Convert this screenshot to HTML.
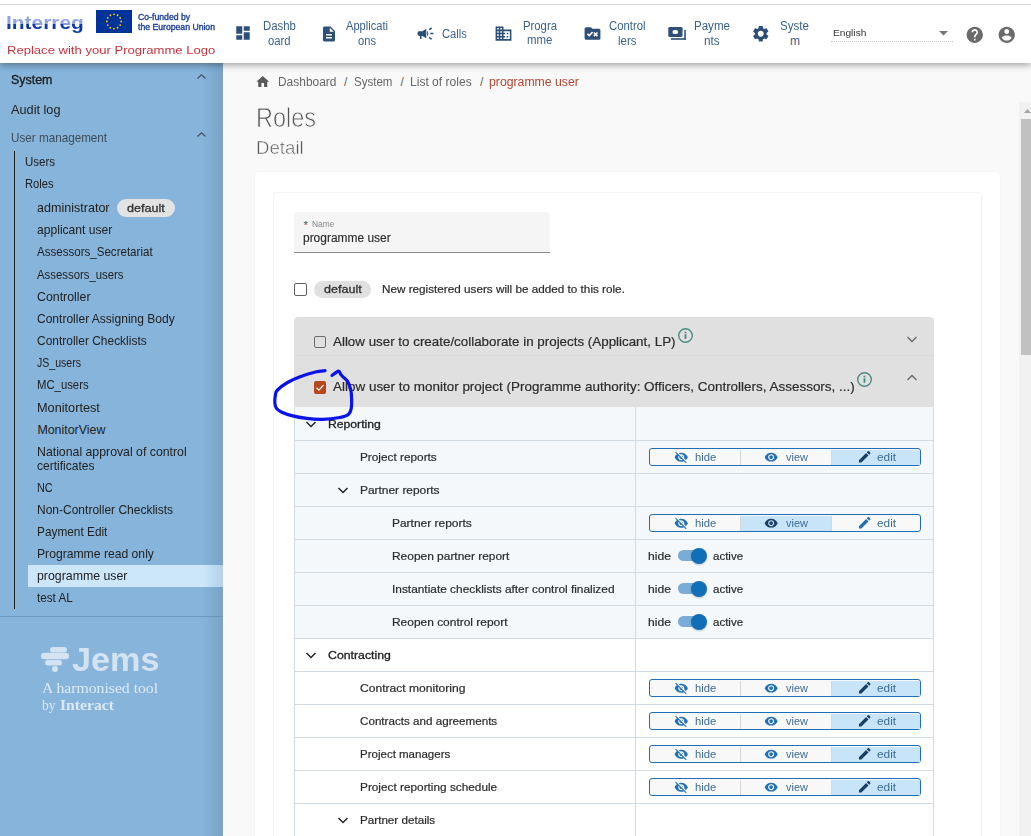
<!DOCTYPE html>
<html><head><meta charset="utf-8">
<style>
*{box-sizing:border-box;margin:0;padding:0}
html,body{width:1031px;height:836px;overflow:hidden;background:#f9f9f9;font-family:"Liberation Sans",sans-serif;color:#333;position:relative}
.abs{position:absolute}
.t{position:absolute;white-space:nowrap}
</style></head><body>
<div class="abs" style="left:0px;top:0px;width:1031px;height:4px;background:#fff;z-index:7"></div>
<div class="abs" style="left:0px;top:4px;width:1031px;height:1px;background:#dadada;z-index:7"></div>
<div class="abs" style="left:0px;top:63px;width:223px;height:773px;background:#86b4da"></div>
<div class="abs" style="left:201px;top:63px;width:22px;height:773px;background:linear-gradient(to right,rgba(50,70,90,0),rgba(50,70,90,.15))"></div>
<div class="abs" style="left:223px;top:63px;width:808px;height:773px;background:#f9f9f9"></div>
<div class="abs" style="left:0px;top:5px;width:1031px;height:58px;background:#fff;box-shadow:0 2px 7px rgba(0,0,0,.36);z-index:5"></div>
<div class="t" style="left:6.2px;top:10px;font-size:18.5px;line-height:26px;font-weight:700;transform:scaleX(1.13);transform-origin:0 0;z-index:6;background:linear-gradient(to bottom,#8fa3e3 0,#8fa3e3 53%,#0f3aa5 53%,#0f3aa5 100%);-webkit-background-clip:text;background-clip:text;color:transparent">Interreg</div>
<svg class="abs" style="left:96px;top:10px;z-index:6" width="36" height="23" viewBox="0 0 36 23"><rect width="36" height="23" fill="#003399"/><circle cx="18.00" cy="4.30" r="0.9" fill="#ffcc00"/><circle cx="21.60" cy="5.26" r="0.9" fill="#ffcc00"/><circle cx="24.24" cy="7.90" r="0.9" fill="#ffcc00"/><circle cx="25.20" cy="11.50" r="0.9" fill="#ffcc00"/><circle cx="24.24" cy="15.10" r="0.9" fill="#ffcc00"/><circle cx="21.60" cy="17.74" r="0.9" fill="#ffcc00"/><circle cx="18.00" cy="18.70" r="0.9" fill="#ffcc00"/><circle cx="14.40" cy="17.74" r="0.9" fill="#ffcc00"/><circle cx="11.76" cy="15.10" r="0.9" fill="#ffcc00"/><circle cx="10.80" cy="11.50" r="0.9" fill="#ffcc00"/><circle cx="11.76" cy="7.90" r="0.9" fill="#ffcc00"/><circle cx="14.40" cy="5.26" r="0.9" fill="#ffcc00"/></svg>
<div class="t" style="left:138.00px;top:11.75px;font-size:8.5px;line-height:10px;color:#1b3f9a;transform:scaleX(1.0227);transform-origin:0 0;z-index:6;-webkit-text-stroke:0.35px #1b3f9a;">Co-funded by</div>
<div class="t" style="left:138.00px;top:21.95px;font-size:8.5px;line-height:10px;color:#1b3f9a;transform:scaleX(1.0184);transform-origin:0 0;z-index:6;-webkit-text-stroke:0.35px #1b3f9a;">the European Union</div>
<div class="t" style="left:7.20px;top:42.98px;font-size:11.3px;line-height:14px;color:#c9323f;transform:scaleX(1.1559);transform-origin:0 0;z-index:6;">Replace with your Programme Logo</div>
<svg class="abs" style="left:234px;top:24px;z-index:6;" width="18" height="18" viewBox="0 0 24 24"><path fill="#2d5078" d="M3 13h8V3H3v10zm0 8h8v-6H3v6zm10 0h8V11h-8v10zm0-18v6h8V3h-8z"/></svg>
<div class="t" style="left:262.70px;top:18.84px;font-size:12px;line-height:14px;color:#3a6288;transform:scaleX(0.9458);transform-origin:0 0;z-index:6;">Dashb</div>
<div class="t" style="left:267.80px;top:33.64px;font-size:12px;line-height:14px;color:#3a6288;transform:scaleX(0.9417);transform-origin:0 0;z-index:6;">oard</div>
<svg class="abs" style="left:320px;top:25px;z-index:6;" width="18" height="18" viewBox="0 0 24 24"><path fill="#2d5078" d="M14 2H6c-1.1 0-1.99.9-1.99 2L4 20c0 1.1.89 2 1.99 2H18c1.1 0 2-.9 2-2V8l-6-6zm2 16H8v-2h8v2zm0-4H8v-2h8v2zm-3-5V3.5L18.5 9H13z"/></svg>
<div class="t" style="left:345.90px;top:18.84px;font-size:12px;line-height:14px;color:#3a6288;transform:scaleX(0.9281);transform-origin:0 0;z-index:6;">Applicati</div>
<div class="t" style="left:358.00px;top:33.64px;font-size:12px;line-height:14px;color:#3a6288;transform:scaleX(0.9317);transform-origin:0 0;z-index:6;">ons</div>
<svg class="abs" style="left:415.5px;top:24px;z-index:6;" width="19" height="19" viewBox="0 0 24 24"><path fill="#2d5078" d="M18 11v2h4v-2h-4zm-2 6.61c.96.71 2.21 1.65 3.2 2.39.4-.53.8-1.07 1.2-1.6-.99-.74-2.24-1.68-3.2-2.4-.4.54-.8 1.08-1.2 1.61zM20.4 5.6c-.4-.53-.8-1.07-1.2-1.6-.99.74-2.240 1.68-3.2 2.4.4.53.8 1.07 1.2 1.6.96-.72 2.21-1.65 3.2-2.4zM4 9c-1.1 0-2 .9-2 2v2c0 1.1.9 2 2 2h1v4h2v-4h1l5 3V6L8 9H4zm11.5 3c0-1.33-.58-2.530-1.5-3.35v6.69c.92-.81 1.5-2.01 1.5-3.34z"/></svg>
<div class="t" style="left:441.50px;top:26.64px;font-size:12px;line-height:14px;color:#3a6288;transform:scaleX(0.9288);transform-origin:0 0;z-index:6;">Calls</div>
<svg class="abs" style="left:493.5px;top:23.8px;z-index:6;" width="19" height="19" viewBox="0 0 24 24"><path fill="#2d5078" d="M12 7V3H2v18h20V7H12zM6 19H4v-2h2v2zm0-4H4v-2h2v2zm0-4H4V9h2v2zm0-4H4V5h2v2zm4 12H8v-2h2v2zm0-4H8v-2h2v2zm0-4H8V9h2v2zm0-4H8V5h2v2zm10 12h-8v-2h2v-2h-2v-2h2v-2h-2V9h8v10zm-2-8h-2v2h2v-2zm0 4h-2v2h2v-2z"/></svg>
<div class="t" style="left:523.00px;top:18.84px;font-size:12px;line-height:14px;color:#3a6288;transform:scaleX(0.9429);transform-origin:0 0;z-index:6;">Progra</div>
<div class="t" style="left:527.40px;top:33.44px;font-size:12px;line-height:14px;color:#3a6288;transform:scaleX(0.9535);transform-origin:0 0;z-index:6;">mme</div>
<svg class="abs" style="left:582.5px;top:23.8px;z-index:6;" width="19" height="19" viewBox="0 0 24 24"><path fill="#2d5078" d="M20 6h-8l-2-2H4c-1.1 0-1.99.9-1.99 2L2 18c0 1.1.9 2 2 2h16c1.1 0 2-.9 2-2V8c0-1.1-.9-2-2-2zM7.83 16L5 13.17l1.41-1.41 1.41 1.41 3.54-3.54 1.41 1.41L7.83 16zm9.58-3L19 14.59 17.59 16 16 14.41 14.41 16 13 14.59 14.59 13 13 11.41 14.41 10 16 11.59 17.59 10 19 11.41 17.41 13z"/></svg>
<div class="t" style="left:609.00px;top:18.84px;font-size:12px;line-height:14px;color:#3a6288;transform:scaleX(0.9457);transform-origin:0 0;z-index:6;">Control</div>
<div class="t" style="left:617.90px;top:33.64px;font-size:12px;line-height:14px;color:#3a6288;transform:scaleX(0.9524);transform-origin:0 0;z-index:6;">lers</div>
<div class="t" style="left:693.50px;top:18.84px;font-size:12px;line-height:14px;color:#3a6288;transform:scaleX(0.9620);transform-origin:0 0;z-index:6;">Payme</div>
<div class="t" style="left:703.60px;top:33.64px;font-size:12px;line-height:14px;color:#3a6288;transform:scaleX(0.9800);transform-origin:0 0;z-index:6;">nts</div>
<svg class="abs" style="left:750.6px;top:24.2px;z-index:6;" width="19.5" height="19.5" viewBox="0 0 24 24"><path fill="#2d5078" d="M19.14 12.94c.04-.3.06-.61.06-.94 0-.32-.02-.64-.07-.94l2.03-1.58c.18-.14.23-.41.12-.61l-1.92-3.32c-.12-.22-.37-.29-.59-.22l-2.39.96c-.5-.38-1.03-.7-1.62-.94l-.36-2.54c-.04-.24-.24-.41-.48-.41h-3.84c-.24 0-.43.17-.47.41l-.36 2.540c-.59.24-1.13.57-1.62.94l-2.39-.96c-.22-.08-.47 0-.59.22L2.74 8.87c-.12.21-.08.47.12.61l2.03 1.58c-.05.3-.09.63-.09.94s.02.64.07.94l-2.03 1.58c-.18.14-.23.41-.12.61l1.92 3.32c.12.22.37.29.59.22l2.39-.96c.5.38 1.03.7 1.62.94l.36 2.54c.05.24.24.41.48.41h3.84c.24 0 .44-.17.47-.41l.36-2.54c.59-.24 1.13-.56 1.62-.94l2.39.96c.22.08.47 0 .59-.22l1.92-3.32c.12-.22.07-.47-.12-.61l-2.01-1.58zM12 15.6c-1.98 0-3.6-1.62-3.6-3.6s1.62-3.6 3.6-3.6 3.6 1.62 3.6 3.6-1.620 3.6-3.6 3.6z"/></svg>
<div class="t" style="left:780.00px;top:18.84px;font-size:12px;line-height:14px;color:#3a6288;transform:scaleX(0.9667);transform-origin:0 0;z-index:6;">Syste</div>
<div class="t" style="left:789.90px;top:33.64px;font-size:12px;line-height:14px;color:#3a6288;z-index:6;">m</div>
<svg class="abs" style="left:0px;top:0px;z-index:6" width="1031" height="63" viewBox="0 0 1031 63"><g fill="#2d5078"><rect x="668.3" y="27" width="14.2" height="9.9" rx="1.3"/><rect x="684.2" y="30" width="1.6" height="9.8"/><rect x="670.9" y="38.2" width="14.9" height="1.6"/></g><rect x="672.6" y="29.9" width="5.4" height="4.1" rx="1.6" fill="#fff"/></svg>
<div class="t" style="left:832.60px;top:27.47px;font-size:9.6px;line-height:12px;color:#333;transform:scaleX(1.0607);transform-origin:0 0;z-index:6;">English</div>
<svg class="abs" style="left:937px;top:29px;z-index:6" width="12" height="8" viewBox="0 0 12 8"><path d="M2 2l4.5 4.5L11 2z" fill="#757575"/></svg>
<div class="abs" style="left:831px;top:41px;width:122px;height:1px;border-top:1px dotted #c8c8c8;z-index:6"></div>
<svg class="abs" style="left:965.2px;top:24.5px;z-index:6;" width="19.5" height="19.5" viewBox="0 0 24 24"><path fill="#6b6b6b" d="M12 2C6.48 2 2 6.48 2 12s4.48 10 10 10 10-4.48 10-10S17.52 2 12 2zm1 17h-2v-2h2v2zm2.07-7.75l-.9.92C13.45 12.9 13 13.5 13 15h-2v-.5c0-1.1.45-2.1 1.17-2.83l1.24-1.26c.37-.36.59-.86.59-1.41 0-1.1-.9-2-2-2s-2 .9-2 2H8c0-2.21 1.79-4 4-4s4 1.79 4 4c0 .88-.36 1.68-.93 2.25z"/></svg>
<svg class="abs" style="left:997.2px;top:24.5px;z-index:6;" width="19.5" height="19.5" viewBox="0 0 24 24"><path fill="#6b6b6b" d="M12 2C6.48 2 2 6.48 2 12s4.48 10 10 10 10-4.48 10-10S17.52 2 12 2zm0 3c1.66 0 3 1.34 3 3s-1.34 3-3 3-3-1.34-3-3 1.34-3 3-3zm0 14.2c-2.5 0-4.71-1.28-6-3.22.03-1.99 4-3.08 6-3.08 1.99 0 5.970 1.09 6 3.08-1.29 1.94-3.5 3.22-6 3.22z"/></svg>
<div class="t" style="left:10.80px;top:73.17px;font-size:12.5px;line-height:15px;color:#1f1f1f;transform:scaleX(0.9931);transform-origin:0 0;-webkit-text-stroke:0.35px #1f1f1f;">System</div>
<svg class="abs" style="left:195px;top:72px;" width="12" height="9" viewBox="0 0 12 9"><path d="M2.5 6.5L6.5 2.8 10.5 6.5" fill="none" stroke="#3d4f60" stroke-width="1.1"/></svg>
<div class="t" style="left:10.80px;top:103.37px;font-size:12.5px;line-height:15px;color:#222;transform:scaleX(1.0180);transform-origin:0 0;">Audit log</div>
<div class="t" style="left:10.80px;top:130.57px;font-size:12.2px;line-height:15px;color:#3e4c59;transform:scaleX(0.9587);transform-origin:0 0;">User management</div>
<svg class="abs" style="left:195px;top:130px;" width="12" height="9" viewBox="0 0 12 9"><path d="M2.5 6.5L6.5 2.8 10.5 6.5" fill="none" stroke="#3d4f60" stroke-width="1.1"/></svg>
<div class="abs" style="left:14px;top:151px;width:1px;height:458px;background:#1e1e1e"></div>
<div class="t" style="left:24.80px;top:154.70px;font-size:12.4px;line-height:15px;color:#222;transform:scaleX(0.9300);transform-origin:0 0;">Users</div>
<div class="t" style="left:24.80px;top:176.70px;font-size:12.4px;line-height:15px;color:#222;transform:scaleX(0.8996);transform-origin:0 0;">Roles</div>
<div class="abs" style="left:28px;top:565px;width:195px;height:22px;background:#cce6fa"></div>
<div class="abs" style="left:203px;top:565px;width:20px;height:22px;background:linear-gradient(to right,rgba(30,70,110,0),rgba(30,70,110,.13))"></div>
<div class="t" style="left:37.40px;top:200.50px;font-size:12.4px;line-height:15px;color:#222;transform:scaleX(1.0129);transform-origin:0 0;">administrator</div>
<div class="t" style="left:37.40px;top:222.80px;font-size:12.4px;line-height:15px;color:#222;transform:scaleX(0.9768);transform-origin:0 0;">applicant user</div>
<div class="t" style="left:37.40px;top:245.40px;font-size:12.4px;line-height:15px;color:#222;transform:scaleX(0.9326);transform-origin:0 0;">Assessors_Secretariat</div>
<div class="t" style="left:37.40px;top:267.60px;font-size:12.4px;line-height:15px;color:#222;transform:scaleX(0.9171);transform-origin:0 0;">Assessors_users</div>
<div class="t" style="left:37.40px;top:289.50px;font-size:12.4px;line-height:15px;color:#222;transform:scaleX(0.9971);transform-origin:0 0;">Controller</div>
<div class="t" style="left:37.40px;top:311.70px;font-size:12.4px;line-height:15px;color:#222;transform:scaleX(0.9706);transform-origin:0 0;">Controller Assigning Body</div>
<div class="t" style="left:37.40px;top:333.70px;font-size:12.4px;line-height:15px;color:#222;transform:scaleX(0.9656);transform-origin:0 0;">Controller Checklists</div>
<div class="t" style="left:36.80px;top:355.50px;font-size:12.4px;line-height:15px;color:#222;transform:scaleX(0.8509);transform-origin:0 0;">JS_users</div>
<div class="t" style="left:37.40px;top:378.00px;font-size:12.4px;line-height:15px;color:#222;transform:scaleX(0.9136);transform-origin:0 0;">MC_users</div>
<div class="t" style="left:37.40px;top:400.70px;font-size:12.4px;line-height:15px;color:#222;transform:scaleX(1.0258);transform-origin:0 0;">Monitortest</div>
<div class="t" style="left:37.40px;top:422.80px;font-size:12.4px;line-height:15px;color:#222;">MonitorView</div>
<div class="t" style="left:37.40px;top:445.20px;font-size:12.4px;line-height:15px;color:#222;transform:scaleX(0.9923);transform-origin:0 0;">National approval of control</div>
<div class="t" style="left:37.40px;top:458.80px;font-size:12.4px;line-height:15px;color:#222;transform:scaleX(0.9718);transform-origin:0 0;">certificates</div>
<div class="t" style="left:37.40px;top:480.60px;font-size:12.4px;line-height:15px;color:#222;transform:scaleX(0.8762);transform-origin:0 0;">NC</div>
<div class="t" style="left:37.40px;top:502.80px;font-size:12.4px;line-height:15px;color:#222;transform:scaleX(0.9690);transform-origin:0 0;">Non-Controller Checklists</div>
<div class="t" style="left:37.40px;top:524.80px;font-size:12.4px;line-height:15px;color:#222;transform:scaleX(0.9550);transform-origin:0 0;">Payment Edit</div>
<div class="t" style="left:37.40px;top:546.60px;font-size:12.4px;line-height:15px;color:#222;transform:scaleX(0.9813);transform-origin:0 0;">Programme read only</div>
<div class="t" style="left:37.40px;top:568.70px;font-size:12.4px;line-height:15px;color:#222;transform:scaleX(0.9950);transform-origin:0 0;">programme user</div>
<div class="t" style="left:37.40px;top:590.90px;font-size:12.4px;line-height:15px;color:#222;transform:scaleX(0.9435);transform-origin:0 0;">test AL</div>
<div class="abs" style="left:117px;top:199px;width:58px;height:18px;background:#e3e3e3;border-radius:9px"></div>
<div class="t" style="left:126.80px;top:202.02px;font-size:10.6px;line-height:13px;color:#333;transform:scaleX(1.1867);transform-origin:0 0;-webkit-text-stroke:0.3px #333;">default</div>
<div class="abs" style="left:0px;top:616px;width:223px;height:1px;background:#6b98bd"></div>
<svg class="abs" style="left:38px;top:643px;" width="36" height="32" viewBox="0 0 36 32"><g fill="#d3e3f1"><rect x="12" y="4" width="17" height="5.5" rx="2.75"/><rect x="3" y="9.8" width="28" height="6.5" rx="3.25"/><rect x="7" y="17" width="17" height="5.5" rx="2.75"/><circle cx="17" cy="26" r="3"/></g></svg>
<div class="t" style="left:72.00px;top:639.41px;font-size:34px;line-height:41px;color:#d3e3f1;font-weight:700;transform:scaleX(1.0076);transform-origin:0 0;">Jems</div>
<div class="t" style="left:41.50px;top:679.34px;font-size:15px;line-height:18px;color:#dce9f5;font-family:'Liberation Serif',serif;transform:scaleX(1.0474);transform-origin:0 0;">A harmonised tool</div>
<div class="t" style="left:41.50px;top:696.34px;font-size:15px;line-height:18px;color:#dce9f5;font-family:'Liberation Serif',serif;transform:scaleX(0.9067);transform-origin:0 0;">by</div>
<div class="t" style="left:59.60px;top:696.34px;font-size:15px;line-height:18px;color:#dce9f5;font-weight:700;font-family:'Liberation Serif',serif;transform:scaleX(1.0431);transform-origin:0 0;">Interact</div>
<svg class="abs" style="left:254.5px;top:74px;" width="15.5" height="15.5" viewBox="0 0 24 24"><path fill="#5a5a5a" d="M10 20v-6h4v6h5v-8h3L12 3 2 12h3v8z"/></svg>
<div class="t" style="left:278.00px;top:74.84px;font-size:12px;line-height:14px;color:#666;transform:scaleX(0.9952);transform-origin:0 0;">Dashboard</div>
<div class="t" style="left:344.00px;top:74.84px;font-size:12px;line-height:14px;color:#666;">/</div>
<div class="t" style="left:354.00px;top:74.84px;font-size:12px;line-height:14px;color:#666;transform:scaleX(0.9620);transform-origin:0 0;">System</div>
<div class="t" style="left:400.50px;top:74.84px;font-size:12px;line-height:14px;color:#666;">/</div>
<div class="t" style="left:410.00px;top:74.84px;font-size:12px;line-height:14px;color:#666;transform:scaleX(1.0052);transform-origin:0 0;">List of roles</div>
<div class="t" style="left:480.00px;top:74.84px;font-size:12px;line-height:14px;color:#666;">/</div>
<div class="t" style="left:489.40px;top:74.84px;font-size:12px;line-height:14px;color:#b5432f;transform:scaleX(1.0202);transform-origin:0 0;">programme user</div>
<div class="t" style="left:256.00px;top:101.64px;font-size:27px;line-height:32px;color:#555;transform:scaleX(0.8698);transform-origin:0 0;-webkit-text-stroke:0.75px #f9f9f9;">Roles</div>
<div class="t" style="left:256.00px;top:135.61px;font-size:19px;line-height:23px;color:#595959;transform:scaleX(0.9826);transform-origin:0 0;-webkit-text-stroke:0.5px #f9f9f9;">Detail</div>
<div class="abs" style="left:255px;top:172px;width:745px;height:700px;background:#fff;border-radius:4px;box-shadow:0 0 2px rgba(0,0,0,.06)"></div>
<div class="abs" style="left:273px;top:192px;width:709px;height:700px;background:#fff;border:1px solid #f3f3f3;border-radius:4px"></div>
<div class="abs" style="left:294px;top:212px;width:256px;height:41px;background:#f5f5f5;border-radius:4px 4px 0 0;border-bottom:1px solid #8c8c8c"></div>
<div class="t" style="left:303.40px;top:217.51px;font-size:11.5px;line-height:14px;color:#555;">*</div>
<div class="t" style="left:311.70px;top:219.05px;font-size:8.5px;line-height:10px;color:#888;transform:scaleX(0.9870);transform-origin:0 0;">Name</div>
<div class="t" style="left:303.40px;top:231.17px;font-size:12.5px;line-height:15px;color:#2b2b2b;transform:scaleX(0.9554);transform-origin:0 0;-webkit-text-stroke:0.15px #2b2b2b;">programme user</div>
<div class="abs" style="left:294px;top:283px;width:13px;height:13px;border:1.6px solid #616161;border-radius:2px"></div>
<div class="abs" style="left:314px;top:281px;width:57px;height:17px;background:#e0e0e0;border-radius:9px"></div>
<div class="t" style="left:323.80px;top:283.22px;font-size:10.6px;line-height:13px;color:#333;transform:scaleX(1.1867);transform-origin:0 0;-webkit-text-stroke:0.3px #333;">default</div>
<div class="t" style="left:381.80px;top:282.56px;font-size:10.8px;line-height:13px;color:#2b2b2b;transform:scaleX(1.0851);transform-origin:0 0;-webkit-text-stroke:0.2px #2b2b2b;">New registered users will be added to this role.</div>
<div class="abs" style="left:294px;top:317px;width:640px;height:39px;background:#e0e0e0;border-radius:4px 4px 0 0"></div>
<div class="abs" style="left:294px;top:356px;width:640px;height:51px;background:#e0e0e0"></div>
<div class="abs" style="left:294px;top:355px;width:640px;height:1px;background:#dadada"></div>
<div class="abs" style="left:314px;top:336px;width:12px;height:12px;border:1.6px solid #6a6a6a;border-radius:2px"></div>
<div class="t" style="left:333.20px;top:333.92px;font-size:13.5px;line-height:16px;color:#2b2b2b;transform:scaleX(0.9901);transform-origin:0 0;-webkit-text-stroke:0.2px #2b2b2b;">Allow user to create/collaborate in projects (Applicant, LP)</div>
<svg class="abs" style="left:677px;top:327px;" width="17" height="17" viewBox="0 0 17 17"><circle cx="8.5" cy="8.5" r="6.8" fill="none" stroke="#4d8c84" stroke-width="1.4"/><rect x="7.55" y="7.2" width="1.9" height="4.6" fill="#4d8c84"/><rect x="7.55" y="4.7" width="1.9" height="1.6" fill="#4d8c84"/></svg>
<svg class="abs" style="left:906px;top:335px;" width="12" height="9" viewBox="0 0 12 9"><path d="M1.5 2L6 6.5 10.5 2" fill="none" stroke="#666" stroke-width="1.3"/></svg>
<div class="abs" style="left:314px;top:381px;width:12px;height:13px;background:#b5471b;border-radius:2px"></div>
<svg class="abs" style="left:314px;top:381px;" width="12" height="13" viewBox="0 0 12 13"><path d="M2.6 6.8l2.3 2.3 4.6-5" fill="none" stroke="#fff" stroke-width="1.3"/></svg>
<div class="t" style="left:333.20px;top:379.12px;font-size:13.5px;line-height:16px;color:#2b2b2b;transform:scaleX(0.9968);transform-origin:0 0;-webkit-text-stroke:0.2px #2b2b2b;">Allow user to monitor project (Programme authority: Officers, Controllers, Assessors, ...)</div>
<svg class="abs" style="left:856px;top:371px;" width="17" height="17" viewBox="0 0 17 17"><circle cx="8.5" cy="8.5" r="6.8" fill="none" stroke="#4d8c84" stroke-width="1.4"/><rect x="7.55" y="7.2" width="1.9" height="4.6" fill="#4d8c84"/><rect x="7.55" y="4.7" width="1.9" height="1.6" fill="#4d8c84"/></svg>
<svg class="abs" style="left:906px;top:373px;" width="12" height="9" viewBox="0 0 12 9"><path d="M1.5 7L6 2.5 10.5 7" fill="none" stroke="#666" stroke-width="1.3"/></svg>
<div class="abs" style="left:294px;top:407px;width:640px;height:440px;background:#fff;border-left:1px solid #d3dbe2;border-right:1px solid #d3dbe2"></div>
<div class="abs" style="left:295px;top:407px;width:638px;height:231px;background:#f4f8fb"></div>
<div class="abs" style="left:294px;top:440px;width:640px;height:1px;background:#d3dbe2"></div>
<div class="abs" style="left:294px;top:473px;width:640px;height:1px;background:#d3dbe2"></div>
<div class="abs" style="left:294px;top:506px;width:640px;height:1px;background:#d3dbe2"></div>
<div class="abs" style="left:294px;top:539px;width:640px;height:1px;background:#d3dbe2"></div>
<div class="abs" style="left:294px;top:572px;width:640px;height:1px;background:#d3dbe2"></div>
<div class="abs" style="left:294px;top:605px;width:640px;height:1px;background:#d3dbe2"></div>
<div class="abs" style="left:294px;top:638px;width:640px;height:1px;background:#d3dbe2"></div>
<div class="abs" style="left:294px;top:671px;width:640px;height:1px;background:#d3dbe2"></div>
<div class="abs" style="left:294px;top:704px;width:640px;height:1px;background:#d3dbe2"></div>
<div class="abs" style="left:294px;top:737px;width:640px;height:1px;background:#d3dbe2"></div>
<div class="abs" style="left:294px;top:770px;width:640px;height:1px;background:#d3dbe2"></div>
<div class="abs" style="left:294px;top:803px;width:640px;height:1px;background:#d3dbe2"></div>
<div class="abs" style="left:294px;top:836px;width:640px;height:1px;background:#d3dbe2"></div>
<div class="abs" style="left:635px;top:407px;width:1px;height:440px;background:#d3dbe2"></div>
<svg class="abs" style="left:305px;top:419.8px;" width="12" height="9" viewBox="0 0 12 9"><path d="M1.5 2L6 6.5 10.5 2" fill="none" stroke="#222" stroke-width="1.5"/></svg>
<div class="t" style="left:327.60px;top:417.69px;font-size:11px;line-height:13px;color:#222;transform:scaleX(1.1073);transform-origin:0 0;-webkit-text-stroke:0.3px #222;">Reporting</div>
<div class="t" style="left:359.80px;top:450.69px;font-size:11px;line-height:13px;color:#2b2b2b;transform:scaleX(1.0733);transform-origin:0 0;-webkit-text-stroke:0.2px #2b2b2b;">Project reports</div>
<div class="abs" style="left:649px;top:448px;width:272px;height:18px;border:1.5px solid #1f6fb8;border-radius:3px;background:#f8f8f8;overflow:hidden"></div>
<div class="abs" style="left:831px;top:449.5px;width:88.5px;height:15px;background:#c8e4f8"></div>
<div class="abs" style="left:740px;top:449.5px;width:1px;height:15px;background:#d8d8d8"></div>
<div class="abs" style="left:831px;top:449.5px;width:1px;height:15px;background:#d8d8d8"></div>
<svg class="abs" style="left:674px;top:450px;" width="14.5" height="14.5" viewBox="0 0 24 24"><path fill="#2170b8" d="M12 7c2.76 0 5 2.24 5 5 0 .65-.13 1.26-.36 1.83l2.92 2.92c1.51-1.26 2.7-2.89 3.43-4.75-1.73-4.39-6-7.5-11-7.5-1.4 0-2.74.25-3.98.7l2.16 2.16C10.74 7.13 11.35 7 12 7zM2 4.27l2.28 2.28.46.46C3.08 8.3 1.78 10.02 1 12c1.73 4.39 6 7.5 11 7.5 1.55 0 3.03-.3 4.38-.84l.42.42L19.73 22 21 20.73 3.27 3 2 4.27zM7.53 9.8l1.55 1.55c-.05.21-.08.43-.08.65 0 1.66 1.34 3 3 3 .22 0 .44-.03.65-.08l1.55 1.55c-.67.33-1.41.53-2.2.53-2.76 0-5-2.24-5-5 0-.79.2-1.53.53-2.2zm4.31-.78l3.15 3.15.02-.16c0-1.66-1.34-3-3-3l-.17.01z"/></svg>
<div class="t" style="left:694.70px;top:450.69px;font-size:11px;line-height:13px;color:#3d6c99;transform:scaleX(1.0245);transform-origin:0 0;">hide</div>
<svg class="abs" style="left:764.4px;top:450.2px;" width="14.3" height="14.3" viewBox="0 0 24 24"><path fill="#2170b8" d="M12 4.5C7 4.5 2.73 7.61 1 12c1.73 4.39 6 7.5 11 7.5s9.27-3.11 11-7.5c-1.73-4.39-6-7.5-11-7.5zM12 17c-2.76 0-5-2.24-5-5s2.240-5 5-5 5 2.24 5 5-2.24 5-5 5zm0-8c-1.66 0-3 1.34-3 3s1.34 3 3 3 3-1.34 3-3-1.34-3-3-3z"/></svg>
<div class="t" style="left:785.50px;top:450.69px;font-size:11px;line-height:13px;color:#3d6c99;transform:scaleX(0.9975);transform-origin:0 0;">view</div>
<svg class="abs" style="left:856.5px;top:449.2px;" width="15.5" height="15.5" viewBox="0 0 24 24"><path fill="#1a3f66" d="M3 17.25V21h3.75L17.81 9.94l-3.75-3.75L3 17.25zM20.71 7.040c.39-.39.39-1.02 0-1.41l-2.34-2.34c-.39-.39-1.02-.39-1.41 0l-1.83 1.83 3.75 3.75 1.83-1.83z"/></svg>
<div class="t" style="left:877.00px;top:450.69px;font-size:11px;line-height:13px;color:#3d6c99;transform:scaleX(1.0728);transform-origin:0 0;">edit</div>
<svg class="abs" style="left:337px;top:485.8px;" width="12" height="9" viewBox="0 0 12 9"><path d="M1.5 2L6 6.5 10.5 2" fill="none" stroke="#222" stroke-width="1.5"/></svg>
<div class="t" style="left:359.80px;top:483.69px;font-size:11px;line-height:13px;color:#2b2b2b;transform:scaleX(1.0835);transform-origin:0 0;-webkit-text-stroke:0.2px #2b2b2b;">Partner reports</div>
<div class="t" style="left:391.50px;top:516.69px;font-size:11px;line-height:13px;color:#2b2b2b;transform:scaleX(1.0863);transform-origin:0 0;-webkit-text-stroke:0.2px #2b2b2b;">Partner reports</div>
<div class="abs" style="left:649px;top:514px;width:272px;height:18px;border:1.5px solid #1f6fb8;border-radius:3px;background:#f8f8f8;overflow:hidden"></div>
<div class="abs" style="left:740px;top:515.5px;width:91px;height:15px;background:#c8e4f8"></div>
<div class="abs" style="left:740px;top:515.5px;width:1px;height:15px;background:#d8d8d8"></div>
<div class="abs" style="left:831px;top:515.5px;width:1px;height:15px;background:#d8d8d8"></div>
<svg class="abs" style="left:674px;top:516px;" width="14.5" height="14.5" viewBox="0 0 24 24"><path fill="#2170b8" d="M12 7c2.76 0 5 2.24 5 5 0 .65-.13 1.26-.36 1.83l2.92 2.92c1.51-1.26 2.7-2.89 3.43-4.75-1.73-4.39-6-7.5-11-7.5-1.4 0-2.74.25-3.98.7l2.16 2.16C10.74 7.13 11.35 7 12 7zM2 4.27l2.28 2.28.46.46C3.08 8.3 1.78 10.02 1 12c1.73 4.39 6 7.5 11 7.5 1.55 0 3.03-.3 4.38-.84l.42.42L19.73 22 21 20.73 3.27 3 2 4.27zM7.53 9.8l1.55 1.55c-.05.21-.08.43-.08.65 0 1.66 1.34 3 3 3 .22 0 .44-.03.65-.08l1.55 1.55c-.67.33-1.41.53-2.2.53-2.76 0-5-2.24-5-5 0-.79.2-1.53.53-2.2zm4.31-.78l3.15 3.15.02-.16c0-1.66-1.34-3-3-3l-.17.01z"/></svg>
<div class="t" style="left:694.70px;top:516.69px;font-size:11px;line-height:13px;color:#3d6c99;transform:scaleX(1.0245);transform-origin:0 0;">hide</div>
<svg class="abs" style="left:764.4px;top:516.2px;" width="14.3" height="14.3" viewBox="0 0 24 24"><path fill="#1a3f66" d="M12 4.5C7 4.5 2.73 7.61 1 12c1.73 4.39 6 7.5 11 7.5s9.27-3.11 11-7.5c-1.73-4.39-6-7.5-11-7.5zM12 17c-2.76 0-5-2.24-5-5s2.240-5 5-5 5 2.24 5 5-2.24 5-5 5zm0-8c-1.66 0-3 1.34-3 3s1.34 3 3 3 3-1.34 3-3-1.34-3-3-3z"/></svg>
<div class="t" style="left:785.50px;top:516.69px;font-size:11px;line-height:13px;color:#3d6c99;transform:scaleX(0.9975);transform-origin:0 0;">view</div>
<svg class="abs" style="left:856.5px;top:515.2px;" width="15.5" height="15.5" viewBox="0 0 24 24"><path fill="#2170b8" d="M3 17.25V21h3.75L17.81 9.94l-3.75-3.75L3 17.25zM20.71 7.040c.39-.39.39-1.02 0-1.41l-2.34-2.34c-.39-.39-1.02-.39-1.41 0l-1.83 1.83 3.75 3.75 1.83-1.83z"/></svg>
<div class="t" style="left:877.00px;top:516.69px;font-size:11px;line-height:13px;color:#3d6c99;transform:scaleX(1.0728);transform-origin:0 0;">edit</div>
<div class="t" style="left:391.50px;top:549.69px;font-size:11px;line-height:13px;color:#2b2b2b;transform:scaleX(1.0846);transform-origin:0 0;-webkit-text-stroke:0.2px #2b2b2b;">Reopen partner report</div>
<div class="t" style="left:648.30px;top:549.69px;font-size:11px;line-height:13px;color:#2b2b2b;transform:scaleX(1.1015);transform-origin:0 0;-webkit-text-stroke:0.2px #2b2b2b;">hide</div>
<div class="abs" style="left:678px;top:550px;width:27px;height:11px;background:#79acd6;border-radius:6px"></div>
<div class="abs" style="left:691px;top:548px;width:16px;height:16px;background:#136eb8;border-radius:50%;box-shadow:0 1px 2px rgba(0,0,0,.2)"></div>
<div class="t" style="left:713.00px;top:549.69px;font-size:11px;line-height:13px;color:#2b2b2b;transform:scaleX(1.0449);transform-origin:0 0;-webkit-text-stroke:0.2px #2b2b2b;">active</div>
<div class="t" style="left:391.50px;top:582.69px;font-size:11px;line-height:13px;color:#2b2b2b;transform:scaleX(1.0799);transform-origin:0 0;-webkit-text-stroke:0.2px #2b2b2b;">Instantiate checklists after control finalized</div>
<div class="t" style="left:648.30px;top:582.69px;font-size:11px;line-height:13px;color:#2b2b2b;transform:scaleX(1.1015);transform-origin:0 0;-webkit-text-stroke:0.2px #2b2b2b;">hide</div>
<div class="abs" style="left:678px;top:583px;width:27px;height:11px;background:#79acd6;border-radius:6px"></div>
<div class="abs" style="left:691px;top:581px;width:16px;height:16px;background:#136eb8;border-radius:50%;box-shadow:0 1px 2px rgba(0,0,0,.2)"></div>
<div class="t" style="left:713.00px;top:582.69px;font-size:11px;line-height:13px;color:#2b2b2b;transform:scaleX(1.0449);transform-origin:0 0;-webkit-text-stroke:0.2px #2b2b2b;">active</div>
<div class="t" style="left:391.50px;top:615.69px;font-size:11px;line-height:13px;color:#2b2b2b;transform:scaleX(1.0853);transform-origin:0 0;-webkit-text-stroke:0.2px #2b2b2b;">Reopen control report</div>
<div class="t" style="left:648.30px;top:615.69px;font-size:11px;line-height:13px;color:#2b2b2b;transform:scaleX(1.1015);transform-origin:0 0;-webkit-text-stroke:0.2px #2b2b2b;">hide</div>
<div class="abs" style="left:678px;top:616px;width:27px;height:11px;background:#79acd6;border-radius:6px"></div>
<div class="abs" style="left:691px;top:614px;width:16px;height:16px;background:#136eb8;border-radius:50%;box-shadow:0 1px 2px rgba(0,0,0,.2)"></div>
<div class="t" style="left:713.00px;top:615.69px;font-size:11px;line-height:13px;color:#2b2b2b;transform:scaleX(1.0449);transform-origin:0 0;-webkit-text-stroke:0.2px #2b2b2b;">active</div>
<svg class="abs" style="left:305px;top:650.8px;" width="12" height="9" viewBox="0 0 12 9"><path d="M1.5 2L6 6.5 10.5 2" fill="none" stroke="#222" stroke-width="1.5"/></svg>
<div class="t" style="left:327.60px;top:648.69px;font-size:11px;line-height:13px;color:#222;transform:scaleX(1.1179);transform-origin:0 0;-webkit-text-stroke:0.3px #222;">Contracting</div>
<div class="t" style="left:359.80px;top:681.69px;font-size:11px;line-height:13px;color:#2b2b2b;transform:scaleX(1.0982);transform-origin:0 0;-webkit-text-stroke:0.2px #2b2b2b;">Contract monitoring</div>
<div class="abs" style="left:649px;top:679px;width:272px;height:18px;border:1.5px solid #1f6fb8;border-radius:3px;background:#f8f8f8;overflow:hidden"></div>
<div class="abs" style="left:831px;top:680.5px;width:88.5px;height:15px;background:#c8e4f8"></div>
<div class="abs" style="left:740px;top:680.5px;width:1px;height:15px;background:#d8d8d8"></div>
<div class="abs" style="left:831px;top:680.5px;width:1px;height:15px;background:#d8d8d8"></div>
<svg class="abs" style="left:674px;top:681px;" width="14.5" height="14.5" viewBox="0 0 24 24"><path fill="#2170b8" d="M12 7c2.76 0 5 2.24 5 5 0 .65-.13 1.26-.36 1.83l2.92 2.92c1.51-1.26 2.7-2.89 3.43-4.75-1.73-4.39-6-7.5-11-7.5-1.4 0-2.74.25-3.98.7l2.16 2.16C10.74 7.13 11.35 7 12 7zM2 4.27l2.28 2.28.46.46C3.08 8.3 1.78 10.02 1 12c1.73 4.39 6 7.5 11 7.5 1.55 0 3.03-.3 4.38-.84l.42.42L19.73 22 21 20.73 3.27 3 2 4.27zM7.53 9.8l1.55 1.55c-.05.21-.08.43-.08.65 0 1.66 1.34 3 3 3 .22 0 .44-.03.65-.08l1.55 1.55c-.67.33-1.41.53-2.2.53-2.76 0-5-2.24-5-5 0-.79.2-1.53.53-2.2zm4.31-.78l3.15 3.15.02-.16c0-1.66-1.34-3-3-3l-.17.01z"/></svg>
<div class="t" style="left:694.70px;top:681.69px;font-size:11px;line-height:13px;color:#3d6c99;transform:scaleX(1.0245);transform-origin:0 0;">hide</div>
<svg class="abs" style="left:764.4px;top:681.2px;" width="14.3" height="14.3" viewBox="0 0 24 24"><path fill="#2170b8" d="M12 4.5C7 4.5 2.73 7.61 1 12c1.73 4.39 6 7.5 11 7.5s9.27-3.11 11-7.5c-1.73-4.39-6-7.5-11-7.5zM12 17c-2.76 0-5-2.24-5-5s2.240-5 5-5 5 2.24 5 5-2.24 5-5 5zm0-8c-1.66 0-3 1.34-3 3s1.34 3 3 3 3-1.34 3-3-1.34-3-3-3z"/></svg>
<div class="t" style="left:785.50px;top:681.69px;font-size:11px;line-height:13px;color:#3d6c99;transform:scaleX(0.9975);transform-origin:0 0;">view</div>
<svg class="abs" style="left:856.5px;top:680.2px;" width="15.5" height="15.5" viewBox="0 0 24 24"><path fill="#1a3f66" d="M3 17.25V21h3.75L17.81 9.94l-3.75-3.75L3 17.25zM20.71 7.040c.39-.39.39-1.02 0-1.41l-2.34-2.34c-.39-.39-1.02-.39-1.41 0l-1.83 1.83 3.75 3.75 1.83-1.83z"/></svg>
<div class="t" style="left:877.00px;top:681.69px;font-size:11px;line-height:13px;color:#3d6c99;transform:scaleX(1.0728);transform-origin:0 0;">edit</div>
<div class="t" style="left:359.80px;top:714.69px;font-size:11px;line-height:13px;color:#2b2b2b;transform:scaleX(1.0584);transform-origin:0 0;-webkit-text-stroke:0.2px #2b2b2b;">Contracts and agreements</div>
<div class="abs" style="left:649px;top:712px;width:272px;height:18px;border:1.5px solid #1f6fb8;border-radius:3px;background:#f8f8f8;overflow:hidden"></div>
<div class="abs" style="left:831px;top:713.5px;width:88.5px;height:15px;background:#c8e4f8"></div>
<div class="abs" style="left:740px;top:713.5px;width:1px;height:15px;background:#d8d8d8"></div>
<div class="abs" style="left:831px;top:713.5px;width:1px;height:15px;background:#d8d8d8"></div>
<svg class="abs" style="left:674px;top:714px;" width="14.5" height="14.5" viewBox="0 0 24 24"><path fill="#2170b8" d="M12 7c2.76 0 5 2.24 5 5 0 .65-.13 1.26-.36 1.83l2.92 2.92c1.51-1.26 2.7-2.89 3.43-4.75-1.73-4.39-6-7.5-11-7.5-1.4 0-2.74.25-3.98.7l2.16 2.16C10.74 7.13 11.35 7 12 7zM2 4.27l2.28 2.28.46.46C3.08 8.3 1.78 10.02 1 12c1.73 4.39 6 7.5 11 7.5 1.55 0 3.03-.3 4.38-.84l.42.42L19.73 22 21 20.73 3.27 3 2 4.27zM7.53 9.8l1.55 1.55c-.05.21-.08.43-.08.65 0 1.66 1.34 3 3 3 .22 0 .44-.03.65-.08l1.55 1.55c-.67.33-1.41.53-2.2.53-2.76 0-5-2.24-5-5 0-.79.2-1.53.53-2.2zm4.31-.78l3.15 3.15.02-.16c0-1.66-1.34-3-3-3l-.17.01z"/></svg>
<div class="t" style="left:694.70px;top:714.69px;font-size:11px;line-height:13px;color:#3d6c99;transform:scaleX(1.0245);transform-origin:0 0;">hide</div>
<svg class="abs" style="left:764.4px;top:714.2px;" width="14.3" height="14.3" viewBox="0 0 24 24"><path fill="#2170b8" d="M12 4.5C7 4.5 2.73 7.61 1 12c1.73 4.39 6 7.5 11 7.5s9.27-3.11 11-7.5c-1.73-4.39-6-7.5-11-7.5zM12 17c-2.76 0-5-2.24-5-5s2.240-5 5-5 5 2.24 5 5-2.24 5-5 5zm0-8c-1.66 0-3 1.34-3 3s1.34 3 3 3 3-1.34 3-3-1.34-3-3-3z"/></svg>
<div class="t" style="left:785.50px;top:714.69px;font-size:11px;line-height:13px;color:#3d6c99;transform:scaleX(0.9975);transform-origin:0 0;">view</div>
<svg class="abs" style="left:856.5px;top:713.2px;" width="15.5" height="15.5" viewBox="0 0 24 24"><path fill="#1a3f66" d="M3 17.25V21h3.75L17.81 9.94l-3.75-3.75L3 17.25zM20.71 7.040c.39-.39.39-1.02 0-1.41l-2.34-2.34c-.39-.39-1.02-.39-1.41 0l-1.83 1.83 3.75 3.75 1.83-1.83z"/></svg>
<div class="t" style="left:877.00px;top:714.69px;font-size:11px;line-height:13px;color:#3d6c99;transform:scaleX(1.0728);transform-origin:0 0;">edit</div>
<div class="t" style="left:359.80px;top:747.69px;font-size:11px;line-height:13px;color:#2b2b2b;transform:scaleX(1.0466);transform-origin:0 0;-webkit-text-stroke:0.2px #2b2b2b;">Project managers</div>
<div class="abs" style="left:649px;top:745px;width:272px;height:18px;border:1.5px solid #1f6fb8;border-radius:3px;background:#f8f8f8;overflow:hidden"></div>
<div class="abs" style="left:831px;top:746.5px;width:88.5px;height:15px;background:#c8e4f8"></div>
<div class="abs" style="left:740px;top:746.5px;width:1px;height:15px;background:#d8d8d8"></div>
<div class="abs" style="left:831px;top:746.5px;width:1px;height:15px;background:#d8d8d8"></div>
<svg class="abs" style="left:674px;top:747px;" width="14.5" height="14.5" viewBox="0 0 24 24"><path fill="#2170b8" d="M12 7c2.76 0 5 2.24 5 5 0 .65-.13 1.26-.36 1.83l2.92 2.92c1.51-1.26 2.7-2.89 3.43-4.75-1.73-4.39-6-7.5-11-7.5-1.4 0-2.74.25-3.98.7l2.16 2.16C10.74 7.13 11.35 7 12 7zM2 4.27l2.28 2.28.46.46C3.08 8.3 1.78 10.02 1 12c1.73 4.39 6 7.5 11 7.5 1.55 0 3.03-.3 4.38-.84l.42.42L19.73 22 21 20.73 3.27 3 2 4.27zM7.53 9.8l1.55 1.55c-.05.21-.08.43-.08.65 0 1.66 1.34 3 3 3 .22 0 .44-.03.65-.08l1.55 1.55c-.67.33-1.41.53-2.2.53-2.76 0-5-2.24-5-5 0-.79.2-1.53.53-2.2zm4.31-.78l3.15 3.15.02-.16c0-1.66-1.34-3-3-3l-.17.01z"/></svg>
<div class="t" style="left:694.70px;top:747.69px;font-size:11px;line-height:13px;color:#3d6c99;transform:scaleX(1.0245);transform-origin:0 0;">hide</div>
<svg class="abs" style="left:764.4px;top:747.2px;" width="14.3" height="14.3" viewBox="0 0 24 24"><path fill="#2170b8" d="M12 4.5C7 4.5 2.73 7.61 1 12c1.73 4.39 6 7.5 11 7.5s9.27-3.11 11-7.5c-1.73-4.39-6-7.5-11-7.5zM12 17c-2.76 0-5-2.24-5-5s2.240-5 5-5 5 2.24 5 5-2.24 5-5 5zm0-8c-1.66 0-3 1.34-3 3s1.34 3 3 3 3-1.34 3-3-1.34-3-3-3z"/></svg>
<div class="t" style="left:785.50px;top:747.69px;font-size:11px;line-height:13px;color:#3d6c99;transform:scaleX(0.9975);transform-origin:0 0;">view</div>
<svg class="abs" style="left:856.5px;top:746.2px;" width="15.5" height="15.5" viewBox="0 0 24 24"><path fill="#1a3f66" d="M3 17.25V21h3.75L17.81 9.94l-3.75-3.75L3 17.25zM20.71 7.040c.39-.39.39-1.02 0-1.41l-2.34-2.34c-.39-.39-1.02-.39-1.41 0l-1.83 1.83 3.75 3.75 1.83-1.83z"/></svg>
<div class="t" style="left:877.00px;top:747.69px;font-size:11px;line-height:13px;color:#3d6c99;transform:scaleX(1.0728);transform-origin:0 0;">edit</div>
<div class="t" style="left:359.80px;top:780.69px;font-size:11px;line-height:13px;color:#2b2b2b;transform:scaleX(1.0734);transform-origin:0 0;-webkit-text-stroke:0.2px #2b2b2b;">Project reporting schedule</div>
<div class="abs" style="left:649px;top:778px;width:272px;height:18px;border:1.5px solid #1f6fb8;border-radius:3px;background:#f8f8f8;overflow:hidden"></div>
<div class="abs" style="left:831px;top:779.5px;width:88.5px;height:15px;background:#c8e4f8"></div>
<div class="abs" style="left:740px;top:779.5px;width:1px;height:15px;background:#d8d8d8"></div>
<div class="abs" style="left:831px;top:779.5px;width:1px;height:15px;background:#d8d8d8"></div>
<svg class="abs" style="left:674px;top:780px;" width="14.5" height="14.5" viewBox="0 0 24 24"><path fill="#2170b8" d="M12 7c2.76 0 5 2.24 5 5 0 .65-.13 1.26-.36 1.83l2.92 2.92c1.51-1.26 2.7-2.89 3.43-4.75-1.73-4.39-6-7.5-11-7.5-1.4 0-2.74.25-3.98.7l2.16 2.16C10.74 7.13 11.35 7 12 7zM2 4.27l2.28 2.28.46.46C3.08 8.3 1.78 10.02 1 12c1.73 4.39 6 7.5 11 7.5 1.55 0 3.03-.3 4.38-.84l.42.42L19.73 22 21 20.73 3.27 3 2 4.27zM7.53 9.8l1.55 1.55c-.05.21-.08.43-.08.65 0 1.66 1.34 3 3 3 .22 0 .44-.03.65-.08l1.55 1.55c-.67.33-1.41.53-2.2.53-2.76 0-5-2.24-5-5 0-.79.2-1.53.53-2.2zm4.31-.78l3.15 3.15.02-.16c0-1.66-1.34-3-3-3l-.17.01z"/></svg>
<div class="t" style="left:694.70px;top:780.69px;font-size:11px;line-height:13px;color:#3d6c99;transform:scaleX(1.0245);transform-origin:0 0;">hide</div>
<svg class="abs" style="left:764.4px;top:780.2px;" width="14.3" height="14.3" viewBox="0 0 24 24"><path fill="#2170b8" d="M12 4.5C7 4.5 2.73 7.61 1 12c1.73 4.39 6 7.5 11 7.5s9.27-3.11 11-7.5c-1.73-4.39-6-7.5-11-7.5zM12 17c-2.76 0-5-2.24-5-5s2.240-5 5-5 5 2.24 5 5-2.24 5-5 5zm0-8c-1.66 0-3 1.34-3 3s1.34 3 3 3 3-1.34 3-3-1.34-3-3-3z"/></svg>
<div class="t" style="left:785.50px;top:780.69px;font-size:11px;line-height:13px;color:#3d6c99;transform:scaleX(0.9975);transform-origin:0 0;">view</div>
<svg class="abs" style="left:856.5px;top:779.2px;" width="15.5" height="15.5" viewBox="0 0 24 24"><path fill="#1a3f66" d="M3 17.25V21h3.75L17.81 9.94l-3.75-3.75L3 17.25zM20.71 7.040c.39-.39.39-1.02 0-1.41l-2.34-2.34c-.39-.39-1.02-.39-1.41 0l-1.83 1.83 3.75 3.75 1.83-1.83z"/></svg>
<div class="t" style="left:877.00px;top:780.69px;font-size:11px;line-height:13px;color:#3d6c99;transform:scaleX(1.0728);transform-origin:0 0;">edit</div>
<svg class="abs" style="left:337px;top:815.8px;" width="12" height="9" viewBox="0 0 12 9"><path d="M1.5 2L6 6.5 10.5 2" fill="none" stroke="#222" stroke-width="1.5"/></svg>
<div class="t" style="left:359.80px;top:813.69px;font-size:11px;line-height:13px;color:#2b2b2b;transform:scaleX(1.0599);transform-origin:0 0;-webkit-text-stroke:0.2px #2b2b2b;">Partner details</div>
<div class="abs" style="left:1019px;top:102px;width:12px;height:734px;background:#f1f1f1"></div>
<svg class="abs" style="left:1019px;top:102px;" width="12" height="17" viewBox="0 0 12 17"><path d="M5 11L8.5 7 12 11z" fill="#a3a3a3"/></svg>
<div class="abs" style="left:1021px;top:119px;width:10px;height:236px;background:#c1c1c1"></div>
<svg class="abs" style="left:0px;top:0px;z-index:20" width="1031" height="836" viewBox="0 0 1031 836"><path d="M325 370.7 C323.4 370.9 319.8 370.9 315.4 372 C311.0 373.1 303.4 375.4 298.8 377.2 C294.2 378.9 291.1 380.4 287.5 382.5 C283.9 384.6 279.5 388.0 277.5 390 C275.5 392.0 275.9 392.4 275.5 394.5 C275.1 396.6 274.7 400.2 274.8 402.5 C274.9 404.8 275.2 406.6 276.3 408.2 C277.4 409.8 278.6 410.7 281.3 412 C284.0 413.3 288.5 414.8 292.7 415.9 C296.9 417.0 301.8 417.8 306.7 418.4 C311.6 419.0 316.9 419.4 322.4 419.3 C327.9 419.2 335.5 418.3 339.8 417.5 C344.1 416.7 346.5 416.0 348.4 414.5 C350.3 413.0 350.7 411.3 351.2 408.6 C351.7 405.9 351.7 401.4 351.6 398.2 C351.5 395.0 351.4 392.2 350.7 389.4 C350.0 386.6 348.9 383.6 347.7 381.6 C346.5 379.6 344.5 378.4 343.3 377.2 C342.1 376.0 341.5 375.3 340.7 374.3 C339.9 373.3 339.9 370.9 338.5 371.1 C337.1 371.3 333.1 374.8 332 375.5" fill="none" stroke="#0a12ea" stroke-width="3.2" stroke-linecap="round" stroke-linejoin="round"/></svg>
</body></html>
